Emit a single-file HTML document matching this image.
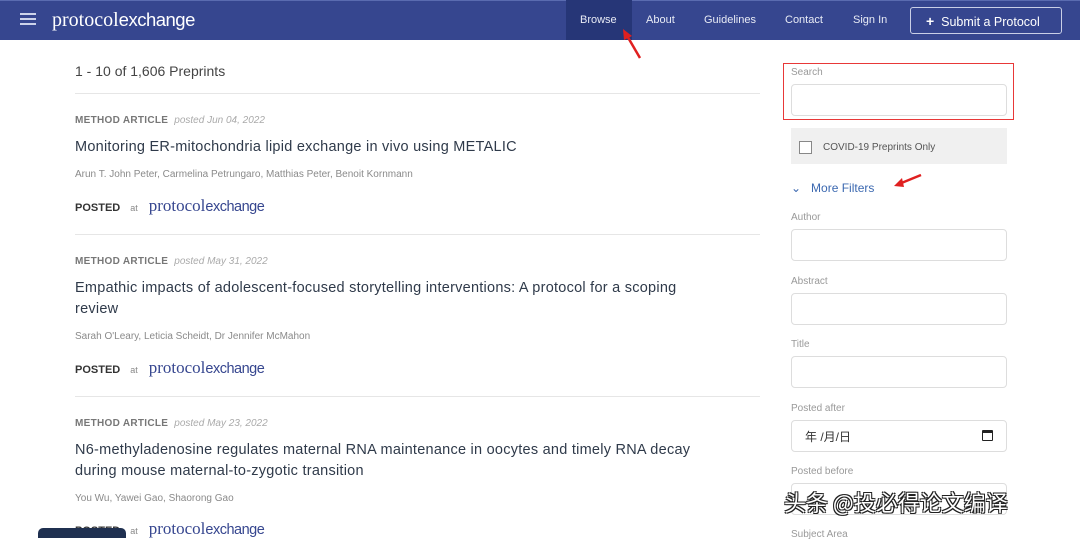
<!DOCTYPE html><html><head><meta charset="utf-8"><style>
*{margin:0;padding:0;box-sizing:border-box}
body{width:1080px;height:534px;overflow:hidden;background:#fff;font-family:"Liberation Sans",sans-serif;position:relative;color:#333}
.hdr{position:absolute;left:0;top:0;width:1080px;height:40px;background:#36468f;border-top:1px solid #5a6bb0}
.a{position:absolute;white-space:nowrap}
.nav{color:#e8ebf5;font-size:11px;top:14px}
.logo{font-family:"Liberation Serif",serif}
.logo .x{font-family:"Liberation Sans",sans-serif;letter-spacing:-0.5px}
.hr{position:absolute;left:75px;width:685px;height:1px;background:#e6e6e6}
.ma{font-size:10px;font-weight:bold;color:#777;letter-spacing:.3px}
.ma i{font-weight:normal;color:#aaa;margin-left:6px;letter-spacing:0}
.tt{font-size:14.5px;color:#2f3a4a;letter-spacing:.25px;line-height:21px}
.au{font-size:10px;color:#8a8a8a}
.po{font-size:11px;font-weight:bold;color:#333}
.po s{text-decoration:none;font-weight:normal;color:#888;font-size:9px;margin:0 11px 0 10px}
.po span{font-family:"Liberation Serif",serif;font-weight:normal;color:#36468f;font-size:17px}
.po span b{font-family:"Liberation Sans",sans-serif;font-weight:normal;font-size:14.5px;letter-spacing:-0.5px}
.lbl{font-size:10px;color:#999}
.inp{position:absolute;left:791px;width:216px;height:32px;border:1px solid #ddd;border-radius:4px;background:#fff}
</style></head><body>
<div class="hdr"></div>
<div class="a" style="left:20px;top:13px;width:16px;height:2px;background:#cdd3ea;box-shadow:0 5px 0 #cdd3ea,0 10px 0 #cdd3ea"></div>
<div class="a logo" style="left:52px;top:9px;font-size:20px;color:#fff">protocol<span class="x" style="font-size:18.5px">exchange</span></div>
<div class="a" style="left:566px;top:0;width:66px;height:40px;background:#263677"></div>
<div class="a nav" style="left:580px">Browse</div>
<div class="a nav" style="left:646px">About</div>
<div class="a nav" style="left:704px">Guidelines</div>
<div class="a nav" style="left:785px">Contact</div>
<div class="a nav" style="left:853px">Sign In</div>
<div class="a" style="left:910px;top:7px;width:152px;height:27px;border:1px solid #c9cfe6;border-radius:3px;color:#fff;font-size:12.5px;padding:5px 0 0 15px"><b style="font-size:14px">+</b>&nbsp; Submit a Protocol</div>
<svg class="a" style="left:620px;top:28px" width="24" height="34"><line x1="20" y1="30" x2="6" y2="6" stroke="#e02020" stroke-width="2.5"/><polygon points="3,1 12,8 4,12" fill="#e02020"/></svg>

<div class="a" style="left:75px;top:63px;font-size:14px;color:#444">1 - 10 of 1,606 Preprints</div>
<div class="hr" style="top:93px"></div>

<div class="a ma" style="left:75px;top:115px">METHOD ARTICLE<i>posted Jun 04, 2022</i></div>
<div class="a tt" style="left:75px;top:137px">Monitoring ER-mitochondria lipid exchange in vivo using METALIC</div>
<div class="a au" style="left:75px;top:169px">Arun T. John Peter, Carmelina Petrungaro, Matthias Peter, Benoit Kornmann</div>
<div class="a po" style="left:75px;top:196px">POSTED<s>at</s><span>protocol<b>exchange</b></span></div>
<div class="hr" style="top:234px"></div>

<div class="a ma" style="left:75px;top:256px">METHOD ARTICLE<i>posted May 31, 2022</i></div>
<div class="a tt" style="left:75px;top:278px;white-space:normal;width:630px">Empathic impacts of adolescent-focused storytelling interventions: A protocol for a scoping review</div>
<div class="a au" style="left:75px;top:331px">Sarah O'Leary, Leticia Scheidt, Dr Jennifer McMahon</div>
<div class="a po" style="left:75px;top:358px">POSTED<s>at</s><span>protocol<b>exchange</b></span></div>
<div class="hr" style="top:396px"></div>

<div class="a ma" style="left:75px;top:418px">METHOD ARTICLE<i>posted May 23, 2022</i></div>
<div class="a tt" style="left:75px;top:440px;white-space:normal;width:650px">N6-methyladenosine regulates maternal RNA maintenance in oocytes and timely RNA decay during mouse maternal-to-zygotic transition</div>
<div class="a au" style="left:75px;top:493px">You Wu, Yawei Gao, Shaorong Gao</div>
<div class="a po" style="left:75px;top:519px">POSTED<s>at</s><span>protocol<b>exchange</b></span></div>
<div class="a" style="left:38px;top:528px;width:88px;height:10px;background:#1f3050;border-radius:5px 5px 0 0"></div>

<div class="a" style="left:783px;top:63px;width:231px;height:57px;border:1.5px solid #e83838"></div>
<div class="a lbl" style="left:791px;top:67px">Search</div>
<div class="inp" style="top:84px"></div>
<div class="a" style="left:791px;top:128px;width:216px;height:36px;background:#f0f0f0"></div>
<div class="a" style="left:799px;top:141px;width:13px;height:13px;border:1px solid #888;background:#fff"></div>
<div class="a" style="left:823px;top:142px;font-size:10px;color:#555">COVID-19 Preprints Only</div>
<div class="a" style="left:791px;top:181px;font-size:12px;color:#3b68b0">⌄&nbsp;&nbsp; More Filters</div>
<svg class="a" style="left:893px;top:172px" width="30" height="18"><line x1="28" y1="3" x2="6" y2="12" stroke="#e02020" stroke-width="2.5"/><polygon points="1,14 9,6 11,15" fill="#e02020"/></svg>
<div class="a lbl" style="left:791px;top:212px">Author</div>
<div class="inp" style="top:229px"></div>
<div class="a lbl" style="left:791px;top:276px">Abstract</div>
<div class="inp" style="top:293px"></div>
<div class="a lbl" style="left:791px;top:339px">Title</div>
<div class="inp" style="top:356px"></div>
<div class="a lbl" style="left:791px;top:403px">Posted after</div>
<div class="inp" style="top:420px"></div>
<div class="a" style="left:805px;top:428px;font-size:12px;color:#333;font-family:'Liberation Sans','Noto Sans CJK SC',sans-serif">年 /月/日</div>
<div class="a" style="left:982px;top:430px;width:11px;height:11px;border:1.5px solid #222;border-top-width:3px;border-radius:1px"></div>
<div class="a lbl" style="left:791px;top:466px">Posted before</div>
<div class="inp" style="top:483px"></div>
<div class="a lbl" style="left:791px;top:529px">Subject Area</div>
<div class="a" style="left:784px;top:486px;font-size:22px;color:#fff;font-family:'Noto Sans CJK SC',sans-serif;text-shadow:1px 1px 0 #222,-1px -1px 0 #222,1px -1px 0 #222,-1px 1px 0 #222">头条 @投必得论文编译</div>
</body></html>
